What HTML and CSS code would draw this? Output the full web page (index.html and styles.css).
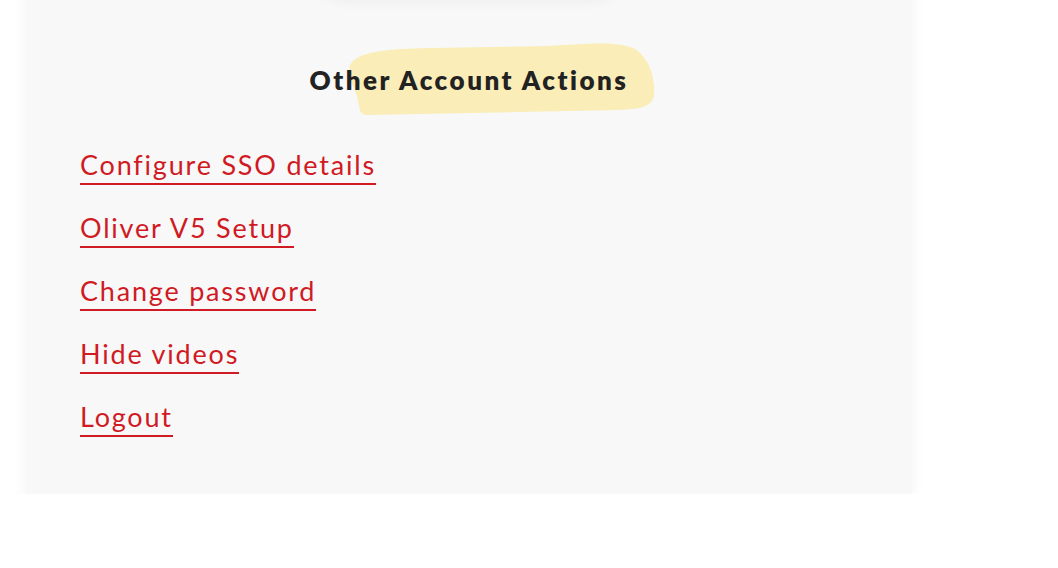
FILE: index.html
```html
<!DOCTYPE html>
<html lang="en">
<head>
    <meta charset="UTF-8">
    <meta name="viewport" content="width=device-width, initial-scale=1.0">
    <title>Account</title>
    <link rel="stylesheet" href="styles.css">
</head>
<body>
    <div class="page">
        <div class="card">
            <div class="top-button"></div>
            <div class="heading-wrap">
                <svg class="blob" width="310" height="74" viewBox="0 0 310 74">
                    <path d="M2 22 C10 8 40 6 80 5 L200 3 C240 1 265 -2 285 5 C300 12 308 35 306 52 C304 65 290 66 270 67 L20 72 C12 72 12 68 10 58 C8 45 -2 35 2 22 Z" fill="#faedb8"/>
                </svg>
                <h2 class="heading">Other Account Actions</h2>
            </div>
            <div class="actions">
                <a href="#" class="action-link">Configure SSO details</a>
                <a href="#" class="action-link">Oliver V5 Setup</a>
                <a href="#" class="action-link">Change password</a>
                <a href="#" class="action-link">Hide videos</a>
                <a href="#" class="action-link">Logout</a>
            </div>
        </div>
    </div>
</body>
</html>
```

FILE: styles.css
```css
body {
    margin: 0;
    padding: 0;
    background-color: #ffffff;
    font-family: "Lato", "Noto Sans", sans-serif;
}

.page {
    padding-left: 26px;
}

.card {
    width: 886px;
    margin-top: -60px;
    padding: 0 0 57px 0;
    background-color: #f8f8f8;
    box-shadow: 0 4px 14px rgba(0, 0, 0, 0.05);
    display: flex;
    flex-direction: column;
}

.top-button {
    align-self: center;
    width: 300px;
    height: 50px;
    margin-bottom: 10px;
    border-radius: 25px;
    background-color: #f8f8f8;
    box-shadow: 0 8px 16px rgba(0, 0, 0, 0.07);
}

.heading-wrap {
    position: relative;
    display: flex;
    justify-content: center;
    padding-top: 62px;
}

.blob {
    position: absolute;
    left: 322px;
    top: 43px;
}

.heading {
    position: relative;
    margin: 0;
    font-size: 26px;
    font-weight: 800;
    letter-spacing: 2.5px;
    color: #222222;
    line-height: 36px;
}

.actions {
    display: flex;
    flex-direction: column;
    align-items: flex-start;
    gap: 30px;
    padding: 54px 0 0 54px;
}

.action-link {
    color: #d01a24;
    font-size: 27px;
    letter-spacing: 1.8px;
    text-decoration: none;
    line-height: 26px;
    padding-bottom: 5px;
    border-bottom: 2px solid #d01a24;
}
```
